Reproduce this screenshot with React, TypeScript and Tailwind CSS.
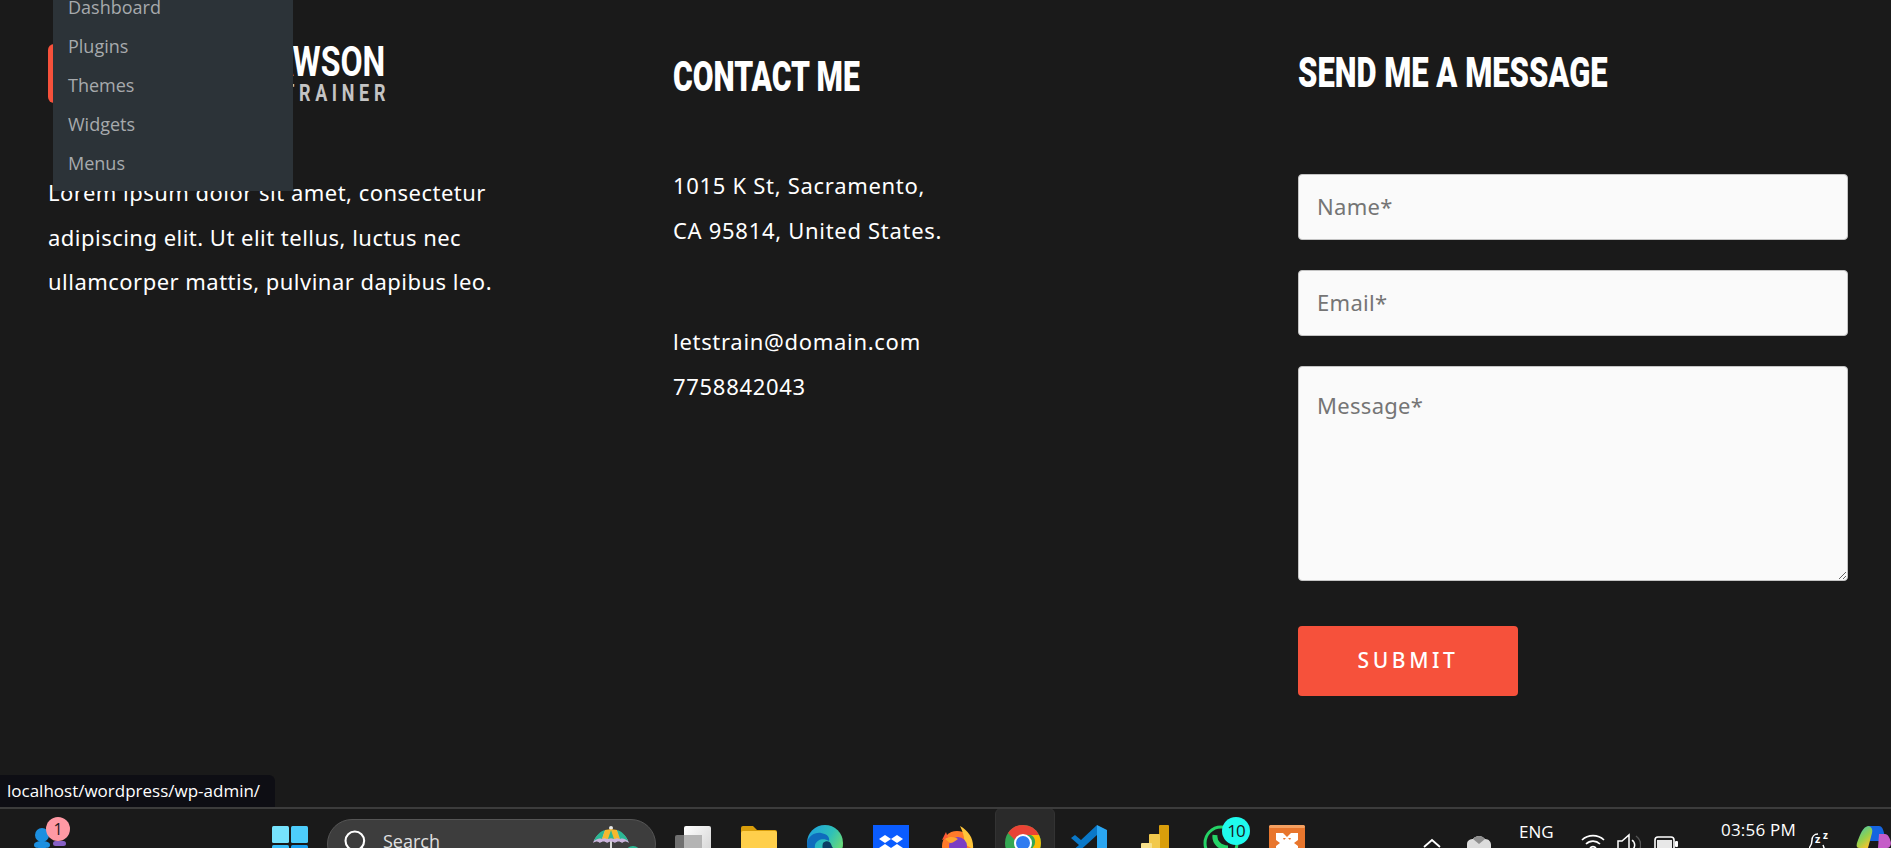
import React from 'react';
import { Search } from 'lucide-react';

const adminLinks = ['Dashboard', 'Plugins', 'Themes', 'Widgets', 'Menus'];

function Heading({ children, className }: { children: React.ReactNode; className?: string }) {
  return (
    <h2
      className={`origin-left whitespace-nowrap font-['Roboto',sans-serif] text-[43px] font-black uppercase leading-none text-white ${className ?? ''}`}
    >
      {children}
    </h2>
  );
}

function Logo() {
  return (
    <div className="flex h-[59px] w-[337px] items-stretch justify-between">
      <div className="w-[60px] rounded-md bg-[#f6513b]" />
      <div className="flex flex-col items-end font-['Roboto',sans-serif] font-bold text-white">
        <span className="mt-[2px] origin-right scale-x-[0.765] text-[42px] leading-[32px]">DAWSON</span>
        <span className="-mr-[5px] mt-[7px] origin-right scale-x-[0.78] text-[23px] leading-[18px] tracking-[6px] text-[#c4c4c4]">TRAINER</span>
      </div>
    </div>
  );
}

function WindowsIcon() {
  return (
    <svg viewBox="0 0 36 36" className="h-[36px] w-[36px]">
      <rect x="0" y="0" width="17" height="17" rx="1.5" fill="#76e3fd" />
      <rect x="19" y="0" width="17" height="17" rx="1.5" fill="#4dcdfb" />
      <rect x="0" y="19" width="17" height="17" rx="1.5" fill="#38bdf8" />
      <rect x="19" y="19" width="17" height="17" rx="1.5" fill="#1a9ff0" />
    </svg>
  );
}

// task bar apps, all cut off by the bottom of the screen
function FilesIcon() {
  return (
    <svg viewBox="0 0 36 36" className="h-[36px] w-[36px]">
      <defs>
        <linearGradient id="filesBack" x1="0" y1="0" x2="1" y2="1">
          <stop offset="0" stopColor="#ffffff" />
          <stop offset="1" stopColor="#cfcfcf" />
        </linearGradient>
      </defs>
      <rect x="9" y="1" width="27" height="35" rx="2" fill="url(#filesBack)" />
      <rect x="0" y="10" width="27" height="26" rx="2" fill="#707070" />
      <rect x="9" y="10" width="18" height="26" fill="#b4b4b4" />
    </svg>
  );
}

function FolderIcon() {
  return (
    <svg viewBox="0 0 36 36" className="h-[36px] w-[36px]">
      <path d="M0 3a2 2 0 0 1 2-2h10l4 4h18a2 2 0 0 1 2 2v6H0z" fill="#d99e0b" />
      <rect x="0" y="6" width="36" height="30" rx="2" fill="#ffcf4b" />
    </svg>
  );
}

function EdgeIcon() {
  return (
    <svg viewBox="0 0 36 36" className="h-[36px] w-[36px]">
      <defs>
        <linearGradient id="edgeTop" x1="0" y1="0" x2="1" y2="0.6">
          <stop offset="0" stopColor="#1b9de2" />
          <stop offset="0.6" stopColor="#2fc0b8" />
          <stop offset="1" stopColor="#6fdc72" />
        </linearGradient>
      </defs>
      <circle cx="18" cy="18" r="18" fill="url(#edgeTop)" />
      <path d="M0 18c1-7 8-11 14-10 6 1 9 4 8 8-5-3-12-2-14 4-1 6 3 13 6 16C6 35 0 27 0 18z" fill="#0f6cbd" />
      <path d="M16 18c3-3 7-2 8 1 1 3 2 5 5 6l-6 11c-5-4-9-12-7-18z" fill="#0b3e66" />
      <path d="M29 25c2 0 5-2 7-7l-2 11-8 7z" fill="#5fd37c" />
    </svg>
  );
}

function DropboxIcon() {
  return (
    <svg viewBox="0 0 36 36" className="h-[36px] w-[36px]">
      <rect width="36" height="36" fill="#0a5cff" />
      <path d="M12 10l6 4-6 4-6-4zM24 10l6 4-6 4-6-4zM12 19l6 4-6 4-6-4zM24 19l6 4-6 4-6-4z" fill="#fff" />
    </svg>
  );
}

function FirefoxIcon() {
  return (
    <svg viewBox="0 0 36 36" className="h-[36px] w-[36px]">
      <circle cx="18" cy="21" r="15" fill="#ff7a2a" />
      <path d="M21 1c9 5 14 13 13 23l-9-5c1-6-1-12-4-18z" fill="#ffc53a" />
      <path d="M3 15l4-8 2 6z" fill="#ff5a36" />
      <circle cx="19" cy="21" r="9" fill="#7b3fc4" />
      <path d="M6 14c5-3 10-2 13 0-3 2-5 4-8 4z" fill="#ffa52e" />
    </svg>
  );
}

function ChromeIcon() {
  return (
    <svg viewBox="0 0 36 36" className="h-[36px] w-[36px]">
      <circle cx="18" cy="18" r="18" fill="#34a853" />
      <path d="M18 0a18 18 0 0 1 16 10H18a8 8 0 0 0-8 5L3 8A18 18 0 0 1 18 0z" fill="#ea4335" />
      <path d="M34 10a18 18 0 0 1-15 26l7-12a8 8 0 0 0 0-14z" fill="#fbbc05" />
      <circle cx="18" cy="18" r="9" fill="#fff" />
      <circle cx="18" cy="18" r="7" fill="#2f7bf0" />
    </svg>
  );
}

function VsCodeIcon() {
  return (
    <svg viewBox="0 0 36 36" className="h-[36px] w-[36px]">
      <path d="M26 0l10 5v26l-10 5z" fill="#2aa6f2" />
      <path d="M26 0L10 15 4 10l-4 3 8 7-8 7 4 3 22-20z" fill="#0a78c8" />
    </svg>
  );
}

function PowerBiIcon() {
  return (
    <svg viewBox="0 0 28 36" className="h-[36px] w-[28px]">
      <rect x="18" y="0" width="10" height="36" rx="1" fill="#d99e0b" />
      <rect x="8" y="9" width="11" height="27" rx="1" fill="#f2c94c" />
      <rect x="0" y="18" width="11" height="18" rx="1" fill="#f7e08a" />
    </svg>
  );
}

function WhatsappIcon() {
  return (
    <svg viewBox="0 0 36 36" className="h-[36px] w-[36px]">
      <circle cx="18" cy="18" r="16" fill="none" stroke="#25d366" strokeWidth="3" />
      <path d="M12 10c-1 7 5 13 13 13" fill="none" stroke="#25d366" strokeWidth="5" />
    </svg>
  );
}

function XamppIcon() {
  return (
    <svg viewBox="0 0 36 36" className="h-[36px] w-[36px]">
      <rect width="36" height="36" rx="3" fill="#e8762d" />
      <rect width="36" height="3" rx="1.5" fill="#f5a060" />
      <path d="M7 8h7l4 4 4-4h7v7l-4 3 4 3v7h-7l-4-4-4 4H7v-7l4-3-4-3z" fill="#fff" />
      <path d="M14 13h3l-2 2zM22 13h-3l2 2z" fill="#e8762d" />
    </svg>
  );
}

function PeopleIcon() {
  return (
    <div className="relative h-[36px] w-[42px]">
      <svg viewBox="0 0 42 36" className="h-[36px] w-[42px]">
        <circle cx="12" cy="23" r="7" fill="#1c8fe0" />
        <path d="M4 33c0-3 4-4 8-4s8 1 8 4-3 3-8 3-8 0-8-3z" fill="#1c8fe0" />
        <rect x="23" y="29" width="13" height="5" rx="2.5" fill="#8660c5" />
      </svg>
      <span className="absolute left-[16px] top-[5px] flex h-[24px] w-[24px] items-center justify-center rounded-full bg-[#ff99a4] font-['Open_Sans',sans-serif] text-[16px] leading-none text-[#1a1a1a]">
        1
      </span>
    </div>
  );
}

function UmbrellaIcon() {
  return (
    <svg viewBox="0 0 36 22" className="h-[22px] w-[36px] overflow-visible">
      <rect x="17" y="2" width="2" height="22" fill="#d8d8d8" />
      <circle cx="18" cy="2" r="2" fill="#e8e8e8" />
      <path d="M0 17c2-7 9-13 18-13s16 6 18 13c-3-2-5-2-7 0-2-2-5-2-7 0-3-2-5-2-8 0-2-2-5-2-7 0-2-2-4-2-7 0z" fill="#cbb4dc" />
      <path d="M1 15C3 9 8 5 12 4L9 13c-3-1-5 0-8 2z" fill="#2bb894" />
      <path d="M12 4c4-1 8-1 12 0l3 9c-3-1-4-1-5 0-3-1-5-1-8 0-2-1-3-1-5 0z" fill="#f5b82e" />
      <path d="M15 13l3-9 3 9c-2-1-4-1-6 0z" fill="#2bb894" />
      <path d="M24 4c4 1 9 5 11 11-3-2-5-3-8-2z" fill="#2bb894" />
      <circle cx="40" cy="28" r="8" fill="#2bb894" />
    </svg>
  );
}

function CloudIcon() {
  return (
    <svg viewBox="0 0 24 16" className="h-[16px] w-[24px]">
      <path d="M0 16V9c0-4 4-5 6-5 2-3 8-5 12 0 4 0 6 3 6 6v6z" fill="#dcdcdc" />
      <path d="M6 4c2-3 8-5 12 0l-6 5z" fill="#8e8e8e" />
    </svg>
  );
}

function CopilotIcon() {
  return (
    <svg viewBox="0 0 35 22" className="h-[22px] w-[35px] overflow-visible">
      <defs>
        <linearGradient id="copilotLeft" x1="0" y1="0" x2="0.6" y2="1">
          <stop offset="0" stopColor="#38c3c0" />
          <stop offset="0.6" stopColor="#93d14c" />
          <stop offset="1" stopColor="#f4c430" />
        </linearGradient>
      </defs>
      <path d="M12 0h11c3 0 4 3 5 7l2 8H14z" fill="#1565e0" />
      <path d="M12 0c-5 1-8 8-11 17-1 4 0 5 3 5h8l4-15c1-4-1-7-4-7z" fill="url(#copilotLeft)" />
      <path d="M23 8h6c3 0 5 4 6 9 0 3-2 5-4 5h-9z" fill="#c55cc8" />
    </svg>
  );
}

function SleepIcon() {
  return (
    <div className="relative h-[22px] w-[21px]">
      <svg viewBox="0 0 21 22" className="h-[22px] w-[21px]">
        <path d="M9 2C5 2 3 5 3 8c0 4-1 6-3 8" fill="none" stroke="#fff" strokeWidth="1.5" />
        <path d="M14 13c1 2 1 4 2 5" fill="none" stroke="#fff" strokeWidth="1.5" />
      </svg>
      <span className="absolute left-[6px] top-[1px] font-['Open_Sans',sans-serif] text-[11px] font-bold leading-[12px]">z</span>
      <span className="absolute left-[14px] -top-[3px] font-['Open_Sans',sans-serif] text-[10px] font-bold leading-[12px]">z</span>
    </div>
  );
}

function TaskIcon({ children, active }: { children: React.ReactNode; active?: boolean }) {
  return (
    <div className="flex h-[39px] w-[66px] items-start justify-center">
      {active ? (
        <div className="-mt-[1px] ml-[4px] flex h-[48px] w-[60px] shrink-0 items-start justify-center rounded-md border border-[#333] bg-[#2a2a2a] pt-[16px] pr-[5px]">
          {children}
        </div>
      ) : (
        <div className="pt-[16px]">{children}</div>
      )}
    </div>
  );
}

export default function App() {
  return (
    <div className="relative flex h-[848px] w-[1891px] flex-col overflow-hidden bg-[#1a1a1a] font-['Noto_Sans',sans-serif] text-white">
      {/* wp admin bar dropdown lying over the logo */}
      <ul className="absolute left-[53px] top-0 z-10 h-[191px] w-[240px] bg-[#2c3338] pl-[15px] font-['Open_Sans',sans-serif] text-[18px] text-[#a7aaad]">
        {adminLinks.map((link, i) => (
          <li key={link} className={`h-[39px] leading-[39px] ${i === 0 ? '-mt-[12px]' : ''}`}>
            {link}
          </li>
        ))}
      </ul>

      <main className="grid flex-1 grid-cols-[625px_625px_550px] pl-[48px]">
        <section className="pt-[44px]">
          <Logo />
          <p className="mt-[67px] w-[460px] text-[22px] leading-[44.5px] tracking-[0.48px]">
            Lorem ipsum dolor sit amet, consectetur adipiscing elit. Ut elit tellus, luctus nec ullamcorper mattis, pulvinar dapibus leo.
          </p>
        </section>

        <section className="pt-[55px]">
          <Heading className="scale-x-[0.7]">Contact me</Heading>
          <p className="mt-[65px] text-[22px] leading-[44.5px] tracking-[0.7px]">
            1015 K St, Sacramento,
            <br />
            CA 95814, United States.
          </p>
          <p className="mt-[67px] text-[22px] leading-[44.5px] tracking-[0.7px]">
            letstrain@domain.com
            <br />
            7758842043
          </p>
        </section>

        <section className="pt-[51px]">
          <Heading className="scale-x-[0.72]">Send me a message</Heading>
          <form className="mt-[80px] flex flex-col items-start">
            <input
              placeholder="Name*"
              className="h-[66px] w-full rounded-[4px] border border-[#c4c4c4] bg-[#fafafa] px-[18px] pb-[2px] text-[22px] tracking-[0.3px] text-[#333] placeholder:text-[#757575]"
            />
            <input
              placeholder="Email*"
              className="mt-[30px] h-[66px] w-full rounded-[4px] border border-[#c4c4c4] bg-[#fafafa] px-[18px] pb-[2px] text-[22px] tracking-[0.3px] text-[#333] placeholder:text-[#757575]"
            />
            <textarea
              placeholder="Message*"
              className="mt-[30px] h-[215px] w-full rounded-[4px] border border-[#c4c4c4] bg-[#fafafa] px-[18px] py-[23px] text-[22px] leading-[30px] tracking-[0.3px] text-[#333] placeholder:text-[#757575]"
            />
            <button
              type="button"
              className="mt-[45px] h-[70px] w-[220px] rounded-[4px] bg-[#f6513b] text-[21px] font-medium tracking-[3.6px] text-white"
            >
              SUBMIT
            </button>
          </form>
        </section>
      </main>

      {/* browser status bubble */}
      <div className="absolute bottom-[41px] left-0 flex h-[32px] w-[275px] items-center whitespace-nowrap rounded-tr-md bg-[#0e0e14] pl-[7px] font-['Open_Sans',sans-serif] text-[17px] text-white">
        localhost/wordpress/wp-admin/
      </div>

      <footer className="flex h-[41px] shrink-0 items-start overflow-hidden border-t-2 border-[#3c3c3c] bg-[#1a1a1a]">
        <div className="ml-[30px] mt-[3px]">
          <PeopleIcon />
        </div>
        <div className="ml-[200px] mt-[17px]">
          <WindowsIcon />
        </div>
        <div className="ml-[19px] mt-[10px] flex h-[50px] w-[329px] shrink-0 items-start rounded-full border border-[#555] bg-[#3d3d3d] pl-[14px] pt-[8px]">
          <Search className="h-[28px] w-[28px] text-white" strokeWidth={1.8} />
          <span className="ml-[13px] font-['Open_Sans',sans-serif] text-[18px] text-[#e0e0e0]">Search</span>
          <div className="ml-auto mr-[26px] -mt-[2px]">
            <UmbrellaIcon />
          </div>
        </div>
        <div className="ml-[4px] flex">
          <TaskIcon><FilesIcon /></TaskIcon>
          <TaskIcon><FolderIcon /></TaskIcon>
          <TaskIcon><EdgeIcon /></TaskIcon>
          <TaskIcon><DropboxIcon /></TaskIcon>
          <TaskIcon><FirefoxIcon /></TaskIcon>
          <TaskIcon active><ChromeIcon /></TaskIcon>
          <TaskIcon><VsCodeIcon /></TaskIcon>
          <TaskIcon><PowerBiIcon /></TaskIcon>
          <div className="relative">
            <TaskIcon><WhatsappIcon /></TaskIcon>
            <span className="absolute left-[34px] top-[8px] flex h-[28px] w-[28px] items-center justify-center rounded-full bg-[#1ffbee] font-['Open_Sans',sans-serif] text-[17px] tracking-[-1px] text-[#1a1a1a]">
              10
            </span>
          </div>
          <TaskIcon><XamppIcon /></TaskIcon>
        </div>

        {/* system tray */}
        <svg viewBox="0 0 18 10" className="ml-[103px] mt-[29px] h-[10px] w-[18px] shrink-0">
          <path d="M1 9l8-7 8 7" fill="none" stroke="#fff" strokeWidth="1.8" />
        </svg>
        <div className="ml-[26px] mt-[26px]">
          <CloudIcon />
        </div>
        <span className="ml-[28px] mt-[11px] w-[34px] shrink-0 font-['Open_Sans',sans-serif] text-[17px] leading-[24px]">ENG</span>
        <svg viewBox="0 0 24 20" className="ml-[28px] mt-[23px] h-[20px] w-[24px] shrink-0">
          <path d="M1 8a16 16 0 0 1 22 0M5 12a10 10 0 0 1 14 0M9 16a4 4 0 0 1 6 0" fill="none" stroke="#fff" strokeWidth="1.7" />
        </svg>
        <svg viewBox="0 0 24 24" className="ml-[12px] mt-[24px] h-[24px] w-[24px] shrink-0">
          <path d="M1 8h4l7-6v20l-7-6H1z" fill="none" stroke="#fff" strokeWidth="1.5" />
          <path d="M15 7a6 6 0 0 1 0 10" fill="none" stroke="#fff" strokeWidth="1.5" />
          <path d="M19 3a11 11 0 0 1 0 18" fill="none" stroke="#555" strokeWidth="1.5" />
        </svg>
        <svg viewBox="0 0 24 16" className="ml-[13px] mt-[27px] h-[16px] w-[24px] shrink-0">
          <rect x="1" y="1" width="19" height="14" rx="3" fill="none" stroke="#fff" strokeWidth="1.6" />
          <rect x="3" y="4" width="15" height="9" fill="#e8e8e8" />
          <rect x="21" y="5" width="3" height="6" rx="1" fill="#fff" />
        </svg>
        <span className="ml-[43px] mt-[9px] w-[75px] shrink-0 whitespace-nowrap font-['Open_Sans',sans-serif] text-[17px] leading-[24px] tracking-[0.2px]">03:56 PM</span>
        <div className="ml-[13px] mt-[23px]">
          <SleepIcon />
        </div>
        <div className="ml-[26px] mt-[17px]">
          <CopilotIcon />
        </div>
      </footer>
    </div>
  );
}
